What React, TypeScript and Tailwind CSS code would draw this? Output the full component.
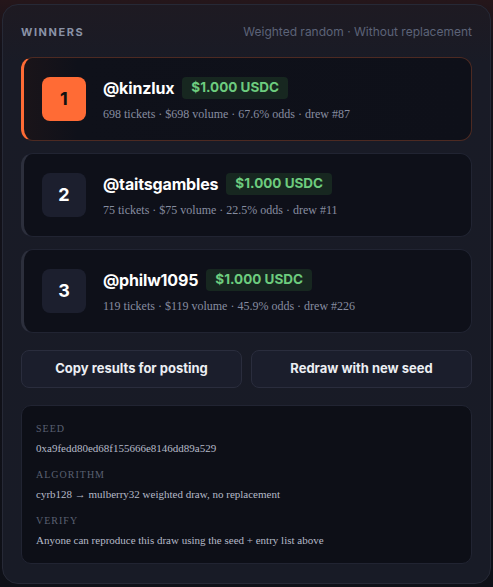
const winners = [
  { rank: 1, name: '@kinzlux', meta: '698 tickets · $698 volume · 67.6% odds · drew #87', top: true },
  { rank: 2, name: '@taitsgambles', meta: '75 tickets · $75 volume · 22.5% odds · drew #11', top: false },
  { rank: 3, name: '@philw1095', meta: '119 tickets · $119 volume · 45.9% odds · drew #226', top: false },
]

const serif = "font-['Liberation_Serif',serif]"

function WinnerRow({ rank, name, meta, top }: { rank: number; name: string; meta: string; top: boolean }) {
  return (
    <div
      className={
        top
          ? 'h-[84px] flex items-center gap-[17px] pl-[18px] rounded-xl border border-[#4d2a22] border-l-[3px] border-l-[#ff6b35] bg-[linear-gradient(90deg,#1a1419_0%,#0f111a_12%,#0e1019_100%)]'
          : 'h-[84px] flex items-center gap-[17px] pl-[18px] rounded-xl border border-[#212432] border-l-[3px] border-l-[#2c2f3c] bg-[#0e1019]'
      }
    >
      <div
        className={
          top
            ? 'w-11 h-11 rounded-lg bg-[#ff6b35] text-[#111] flex items-center justify-center text-lg font-bold'
            : 'w-11 h-11 rounded-lg bg-[#1c1f2e] text-white flex items-center justify-center text-lg font-bold'
        }
      >
        {rank}
      </div>
      <div className="flex flex-col gap-[5px]">
        <div className="flex items-center gap-2">
          <span className="text-[16px] font-bold text-white tracking-[-0.01em]">{name}</span>
          <span className="h-[22px] px-[9px] rounded-[4px] bg-[#172720] text-[#6dcc7e] text-[13.5px] font-bold flex items-center">
            $1.000 USDC
          </span>
        </div>
        <div className={`${serif} text-[12px] text-[#878da0]`}>{meta}</div>
      </div>
    </div>
  )
}

function InfoItem({ label, value }: { label: string; value: string }) {
  return (
    <div className="flex flex-col gap-[4px]">
      <span className="text-[10px] leading-[14px] tracking-[0.1em] text-[#5a6072]">{label}</span>
      <span className="text-[11px] leading-[16px] text-[#b5bac8]">{value}</span>
    </div>
  )
}

export default function App() {
  return (
    <div className="min-h-screen bg-[linear-gradient(180deg,#25161a_0%,#14121a_8%,#0e1017_100%)] pt-1 px-[2px] pb-[5px] font-['Inter',sans-serif]">
      <div className="rounded-2xl border border-[#262936] bg-[linear-gradient(180deg,#1e1a22_0%,#191b26_10%,#181b26_100%)] px-[18px] pt-[18px] pb-[19px]">
        {/* Header */}
        <div className="flex justify-between items-center h-[18px]">
          <span className="text-[11px] font-bold tracking-[0.14em] text-[#8a92a6]">WINNERS</span>
          <span className="text-[12px] text-[#5c6378]">Weighted random · Without replacement</span>
        </div>

        <div className="mt-[16px] flex flex-col gap-3">
          {winners.map((w) => (
            <WinnerRow key={w.rank} {...w} />
          ))}
        </div>

        {/* Actions */}
        <div className="mt-[17px] grid grid-cols-2 gap-[9px]">
          <button className="h-[38px] rounded-lg border border-[#2a2d3d] bg-[#1b1e2c] text-[13px] font-bold text-[#eceef3]">
            Copy results for posting
          </button>
          <button className="h-[38px] rounded-lg border border-[#2a2d3d] bg-[#1b1e2c] text-[13px] font-bold text-[#eceef3]">
            Redraw with new seed
          </button>
        </div>

        {/* Seed info */}
        <div className={`${serif} mt-[17px] rounded-[10px] border border-[#212432] bg-[#0d0f17] px-[14px] pt-[16px] pb-[15px] flex flex-col gap-[12px]`}>
          <InfoItem label="SEED" value="0xa9fedd80ed68f155666e8146dd89a529" />
          <InfoItem label="ALGORITHM" value="cyrb128 → mulberry32 weighted draw, no replacement" />
          <InfoItem label="VERIFY" value="Anyone can reproduce this draw using the seed + entry list above" />
        </div>
      </div>
    </div>
  )
}
